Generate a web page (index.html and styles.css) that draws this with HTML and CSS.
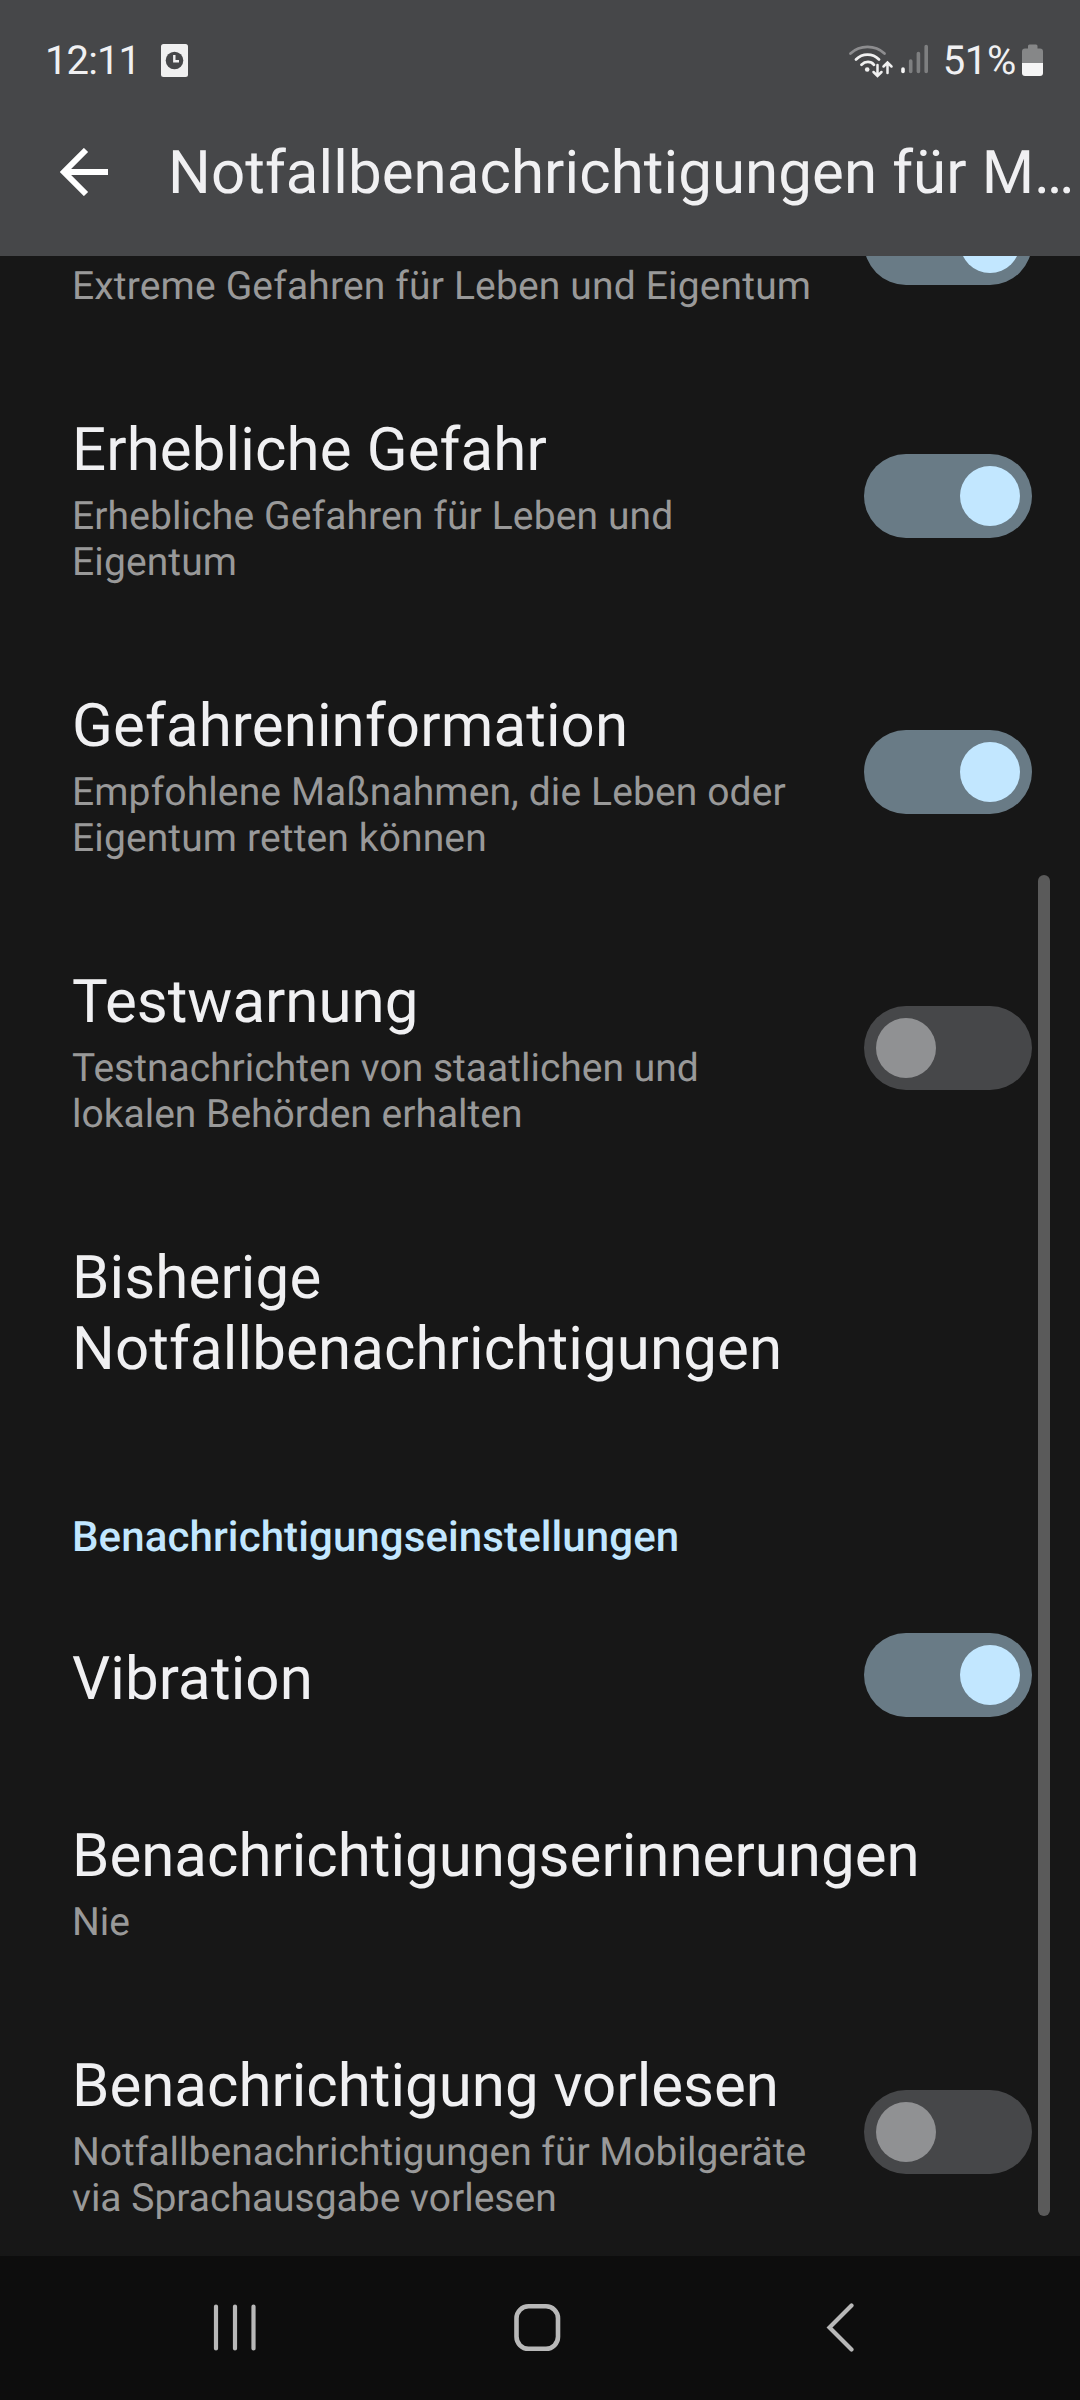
FILE: index.html
```html
<!DOCTYPE html>
<html lang="de">
<head>
<meta charset="utf-8">
<title>Notfallbenachrichtigungen</title>
<link rel="stylesheet" href="styles.css">
</head>
<body>
<div class="screen">
  <header class="top">
    <div class="status">
      <span class="time">12:11</span>
      <svg class="alarm" width="27" height="33" viewBox="0 0 27 33"><rect width="27" height="33" rx="2.5" fill="#f0f0f0"/><circle cx="13.5" cy="16.5" r="8.8" fill="#464749"/><path d="M13.3 11v6.3H18" fill="none" stroke="#f0f0f0" stroke-width="2.4"/></svg>
      <svg class="wifi" width="46" height="36" viewBox="0 0 46 36" fill="none" stroke="#f0f0f0" stroke-width="2.8" stroke-linecap="round">
        <path d="M2.5 10.5C12 1.7 27 1.7 36.5 10.5" stroke="#8d8d8f"/>
        <path d="M8 16.5c6.5-6.5 16.5-6.5 23 0M13.5 21.8c3.8-3.8 9.200-3.8 12.5 0"/>
        <circle cx="19.2" cy="26.5" r="2.3" fill="#f0f0f0" stroke="none"/>
        <path d="M29.5 22v10M25.5 29l4 4 4-4M39.5 30V20M35.5 23.500l4-4 4 4" stroke-width="2.5"/>
      </svg>
      <svg class="signal" width="28" height="30" viewBox="0 0 28 30" stroke-width="3.6" stroke-linecap="round"><path d="M2 25v2.5" stroke="#f5f5f5"/><path d="M9.7 17v10.5M17.4 9.5v18M25.200 2.500v25" stroke="#7e7f80"/></svg>
      <span class="percent">51%</span>
      <svg class="battery" width="21" height="32" viewBox="0 0 21 32"><path d="M6 4.500V2q0-1.500 1.500-1.500h6.500q1.500 0 1.500 1.500v2.500H18q3 0 3 3V19H0V7.500q0-3 3-3z" fill="#868788"/><path d="M0 19h21v10q0 3-3 3H3q-3 0-3-3z" fill="#f5f5f5"/></svg>
    </div>
    <div class="appbar">
      <svg class="back" width="48" height="48" viewBox="0 0 48 48" fill="none" stroke="#fff" stroke-width="6"><path d="M26 2 4 24l22 22M4 24h44"/></svg>
      <h1 class="heading">Notfallbenachrichtigungen für M…</h1>
    </div>
  </header>
  <main class="list">
    <div class="row scrolled">
      <div class="sub loose">Extreme Gefahren für Leben und Eigentum</div>
      <div class="switch on"></div>
    </div>
    <div class="row">
      <div class="text"><div class="title loose">Erhebliche Gefahr</div><div class="sub loose">Erhebliche Gefahren für Leben und<br>Eigentum</div></div>
      <div class="switch on"></div>
    </div>
    <div class="row">
      <div class="text"><div class="title loose">Gefahreninformation</div><div class="sub loose">Empfohlene Maßnahmen, die Leben oder<br>Eigentum retten können</div></div>
      <div class="switch on"></div>
    </div>
    <div class="row">
      <div class="text"><div class="title">Testwarnung</div><div class="sub">Testnachrichten von staatlichen und<br>lokalen Behörden erhalten</div></div>
      <div class="switch"></div>
    </div>
    <div class="row">
      <div class="text"><div class="title loose">Bisherige<br>Notfallbenachrichtigungen</div></div>
    </div>
    <h2 class="section">Benachrichtigungseinstellungen</h2>
    <div class="row single">
      <div class="text"><div class="title loose">Vibration</div></div>
      <div class="switch on"></div>
    </div>
    <div class="row">
      <div class="text"><div class="title">Benachrichtigungserinnerungen</div><div class="sub">Nie</div></div>
    </div>
    <div class="row">
      <div class="text"><div class="title">Benachrichtigung vorlesen</div><div class="sub">Notfallbenachrichtigungen für Mobilgeräte<br>via Sprachausgabe vorlesen</div></div>
      <div class="switch"></div>
    </div>
    <div class="scrollbar"></div>
  </main>
  <nav class="navbar">
    <svg width="44" height="50" viewBox="0 0 44 50" fill="none" stroke="#b8b8b8" stroke-width="4.2" stroke-linecap="round"><path d="M3 4.500v42M22 4.500v42M40.500 4.500v42"/></svg>
    <svg class="home" width="48" height="50" viewBox="0 0 48 50" fill="none" stroke="#b8b8b8" stroke-width="4.6"><rect x="3.5" y="4.3" width="41.5" height="42.5" rx="12"/></svg>
    <svg width="30" height="50" viewBox="0 0 30 50" fill="none" stroke="#b8b8b8" stroke-width="4.2" stroke-linecap="round"><path d="M26.500 3.500 4.500 25.500l22 22"/></svg>
  </nav>
</div>
</body>
</html>
```
FILE: styles.css
```css
* { box-sizing: border-box; }
body { margin: 0; background: #171717; font-family: Roboto, sans-serif; color: #f0f0f2; text-rendering: geometricPrecision; }
.screen { width: 1080px; height: 2400px; display: flex; flex-direction: column; overflow: hidden; }
svg { display: block; flex: none; }

.top { flex: none; height: 256px; background: #464749; }
.status { height: 118px; display: flex; align-items: flex-start; padding: 37px 37px 0 45px; font-size: 40px; line-height: 47px; }
.time, .percent { white-space: nowrap; }
.time { width: 116px; letter-spacing: -0.9px; }
.alarm { margin-top: 7px; margin-right: auto; }
.wifi { margin: 6px 7px 0 0; }
.signal { margin-top: 7px; }
.percent { margin: 0 6px 0 14px; letter-spacing: -0.3px; }
.battery { margin-top: 7px; }
.appbar { height: 138px; display: flex; align-items: flex-start; padding-left: 60px; }
.back { margin-top: 30px; }
.heading { margin: 19px 0 0 60px; font-size: 60px; line-height: 71px; font-weight: 400; letter-spacing: 0.08px; white-space: nowrap; }

.list { position: relative; flex: 1; min-height: 0; overflow: hidden; display: flex; flex-direction: column; justify-content: flex-start; }
.row { flex: none; display: flex; align-items: center; justify-content: space-between; padding: 0 48px 0 72px; }
.text { padding: 56px 0 49px; white-space: nowrap; }
.title { font-size: 60px; line-height: 71px; }
.sub { margin-top: 8px; font-size: 39px; line-height: 46px; color: #999; white-space: nowrap; }
.loose { letter-spacing: 0.12px; }
.scrolled { height: 102px; align-items: flex-start; }
.scrolled .switch { margin-top: -55px; }
.scrolled .sub { margin-top: 7px; letter-spacing: 0.16px; }
.section { flex: none; height: 154px; margin: 0; padding: 80px 0 0 72px; font-size: 42px; line-height: 49px; font-weight: 500; letter-spacing: 0.1px; color: #c2e7ff; }
.single { margin-bottom: 1px; }
.switch { flex: none; width: 168px; height: 84px; border-radius: 42px; background: #464749; padding: 12px; display: flex; }
.switch::before { content: ""; width: 60px; height: 60px; border-radius: 50%; background: #909193; }
.switch.on { background: #697b86; justify-content: flex-end; }
.switch.on::before { background: #c2e7ff; }
.scrollbar { position: absolute; top: 619px; right: 30px; width: 12px; height: 1341px; border-radius: 6px; background: #5a5a5a; }

.navbar { flex: none; height: 144px; background: #0d0d0d; display: flex; align-items: flex-start; padding: 46px 0 0 213px; }
.home { margin: 0 264px 0 256px; }
```
